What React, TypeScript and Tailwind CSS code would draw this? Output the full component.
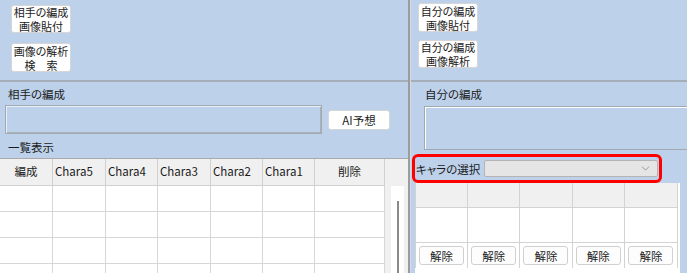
import { ChevronDown } from 'lucide-react';

const leftCols = [
  { label: '編成', cls: 'w-[53px] justify-center' },
  { label: 'Chara5', cls: 'w-[53px] pl-[2px]' },
  { label: 'Chara4', cls: 'w-[52px] pl-[2px]' },
  { label: 'Chara3', cls: 'w-[53px] pl-[2px]' },
  { label: 'Chara2', cls: 'w-[52px] pl-[2px]' },
  { label: 'Chara1', cls: 'w-[52px] pl-[2px]' },
  { label: '削除', cls: 'w-[70px] justify-center' },
];

const rightCols = [0, 1, 2, 3, 4];

function PanelButton({ lines, size }: { lines: string[]; size: string }) {
  return (
    <button
      className={`flex flex-col items-center justify-center rounded-[3px] border border-[#d6d6d6] bg-white text-[11px] leading-[14px] ${size}`}
    >
      {lines.map((l) => (
        <span key={l} className="block">
          {l}
        </span>
      ))}
    </button>
  );
}

export default function App() {
  return (
    <div className="flex h-[273px] w-[687px] overflow-hidden bg-[#bdd2ea] font-['Noto_Sans_CJK_JP',sans-serif] text-[11.5px] text-[#1b1b1b] [font-feature-settings:'palt']">
      {/* Left panel */}
      <div className="flex w-[408px] shrink-0 flex-col">
        <div className="flex h-[80px] flex-col gap-[10px] pl-[11px] pt-[5px]">
          <PanelButton lines={['相手の編成', '画像貼付']} size="h-[28px] w-[60px]" />
          <PanelButton lines={['画像の解析', '検　索']} size="h-[29px] w-[60px]" />
        </div>
        <div className="h-[2px] bg-[#a4adb8]" />

        <div className="flex flex-col px-[5px] pb-[4px] pt-[5px]">
          <span className="pl-[3px] leading-[14px]">相手の編成</span>
          <div className="mt-[4px] flex items-center gap-[6px]">
            <div className="h-[29px] w-[317px] border border-[#a2a9b1] shadow-[inset_1px_1px_0_#e6eef7,inset_-1px_-1px_0_#a8b0b8]" />
            <button className="h-[20px] w-[62px] rounded-[3px] border border-[#d6d6d6] bg-white leading-[14px]">
              AI予想
            </button>
          </div>
          <span className="mt-[6px] pl-[3px] leading-[14px]">一覧表示</span>
        </div>

        {/* List grid */}
        <div className="flex flex-1 overflow-hidden border-t border-[#a9a9a9] bg-white">
          <div className="flex w-[385px] flex-col">
            <div className="flex h-[27px] shrink-0 border-b border-[#d0d0d0] bg-[#f0f0f0]">
              {leftCols.map((c) => (
                <div
                  key={c.label}
                  className={`flex items-center border-r border-[#d0d0d0] ${c.cls}`}
                >
                  {c.label}
                </div>
              ))}
            </div>
            {[0, 1, 2, 3].map((r) => (
              <div key={r} className="flex h-[26px] shrink-0 border-b border-[#d6d6d6]">
                {leftCols.map((c) => (
                  <div key={c.label} className={`border-r border-[#d6d6d6] ${c.cls}`} />
                ))}
              </div>
            ))}
          </div>
          {/* Scrollbar */}
          <div className="flex w-[23px] flex-col bg-[#f0f0f0]">
            <div className="h-[27px] shrink-0" />
            <div className="ml-[6px] flex w-[13px] flex-1 justify-center bg-white">
              <div className="mt-[15px] w-[2px] bg-[#8a8a8a]" />
            </div>
          </div>
        </div>
      </div>

      {/* Splitter */}
      <div className="flex w-[3px] shrink-0">
        <div className="w-[2px] bg-[#9c9c9c]" />
        <div className="w-px bg-[#d3dbe4]" />
      </div>

      {/* Right panel */}
      <div className="flex min-w-0 flex-1 flex-col overflow-hidden">
        <div className="flex h-[80px] flex-col gap-[8px] pl-[7px] pt-[3px]">
          <PanelButton lines={['自分の編成', '画像貼付']} size="h-[29px] w-[60px]" />
          <PanelButton lines={['自分の編成', '画像解析']} size="h-[28px] w-[60px]" />
        </div>
        <div className="h-[2px] bg-[#a4adb8]" />

        <div className="flex flex-col pt-[5px]">
          <span className="pl-[14px] leading-[14px]">自分の編成</span>
          <div className="ml-[13px] mt-[5px] h-[44px] w-[300px] shrink-0 border border-[#a2a9b1] shadow-[inset_1px_1px_0_#ffffff]" />
          <div className="relative mt-[4px] flex h-[29px] items-center">
            <span className="w-[73px] shrink-0 pl-[5px] leading-[14px]">キャラの選択</span>
            <div className="flex h-[17px] w-[174px] items-center justify-end rounded-[2px] border border-[#b4b4b4] bg-[#e5e5e5] pr-[5px]">
              <ChevronDown size={13} strokeWidth={1.2} className="text-[#6d6d6d]" />
            </div>
            <div className="absolute left-[1px] top-0 h-[29px] w-[250px] rounded-[6px] border-[3px] border-[#ff0000]" />
          </div>
        </div>

        {/* Character grid */}
        <div className="ml-[4px] flex w-[265px] flex-1 flex-col bg-white pr-[2px]">
          <div className="grid h-[25px] shrink-0 grid-cols-5 border-x border-b border-[#d3d3d3] bg-[#f0f0f0]">
            {rightCols.map((c) => (
              <div key={c} className="border-r border-[#d3d3d3] last:border-r-0" />
            ))}
          </div>
          <div className="grid h-[35px] shrink-0 grid-cols-5 border-x border-b border-[#d3d3d3]">
            {rightCols.map((c) => (
              <div key={c} className="border-r border-[#d3d3d3] last:border-r-0" />
            ))}
          </div>
          <div className="grid h-[25px] shrink-0 grid-cols-5 border-x border-[#d3d3d3]">
            {rightCols.map((c) => (
              <div
                key={c}
                className="flex items-center justify-center border-r border-[#d3d3d3] last:border-r-0"
              >
                <button className="h-[19px] w-[45px] rounded-[3px] border border-[#d0d0d0] bg-[#fdfdfd] leading-[14px]">
                  解除
                </button>
              </div>
            ))}
          </div>
        </div>
      </div>
    </div>
  );
}
